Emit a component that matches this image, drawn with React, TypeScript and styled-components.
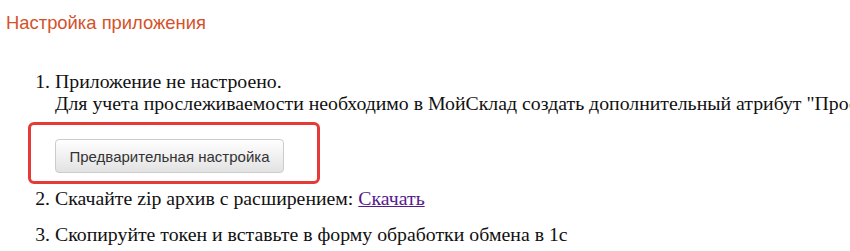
import styled, { createGlobalStyle } from 'styled-components';

const GlobalStyle = createGlobalStyle`
  html, body {
    margin: 0;
    padding: 0;
    background: #fff;
    overflow: hidden;
  }
  body {
    padding: 12px 0 0 6px;
    font-family: "Liberation Serif", "Times New Roman", serif;
  }
`;

const App: React.FC = () => {
  return (
    <>
      <GlobalStyle />
      <Page>
        <Title>Настройка приложения</Title>
        <Steps>
          <Step>
            Приложение не настроено.
            <br />
            Для учета прослеживаемости необходимо в МойСклад создать дополнительный атрибут "Прослеживаемость"
            <ButtonRow>
              <Highlight />
              <SetupButton type="button">Предварительная настройка</SetupButton>
            </ButtonRow>
          </Step>
          <Step>
            Скачайте zip архив с расширением: <DownloadLink href="#">Скачать</DownloadLink>
          </Step>
          <Step>Скопируйте токен и вставьте в форму обработки обмена в 1с</Step>
        </Steps>
      </Page>
    </>
  );
};
export default App;

const Page = styled.div`
    width: 1400px;
`;
const Title = styled.div`
    color: #d4522a;
    font-family: "Liberation Sans", Arial, sans-serif;
    font-size: 18.4px;
    line-height: 22px;
    margin-bottom: 36px;
`;
const Steps = styled.ol`
    margin: 0;
    padding-left: 49px;
    color: #111;
    font-size: 19.8px;
    line-height: 22px;
`;
const Step = styled.li`
    white-space: nowrap;
    margin-bottom: 14px;
`;
const ButtonRow = styled.div`
    position: relative;
    display: flex;
    margin-top: 25px;
`;
const Highlight = styled.div`
    position: absolute;
    left: -27px;
    top: -17px;
    width: 292px;
    height: 62px;
    box-sizing: border-box;
    border: 3px solid #e53a35;
    border-radius: 6px;
    pointer-events: none;
`;
const SetupButton = styled.button`
    width: 229px;
    height: 34px;
    box-sizing: border-box;
    padding: 0 10px;
    border: 1px solid #cccccc;
    border-radius: 4px;
    background: linear-gradient(to bottom, #ffffff 0%, #e2e2e2 100%);
    color: #333;
    font-family: "Liberation Sans", Arial, sans-serif;
    font-size: 15px;
    cursor: pointer;
`;
const DownloadLink = styled.a`
    color: #551a8b;
    text-decoration: underline;
`;
